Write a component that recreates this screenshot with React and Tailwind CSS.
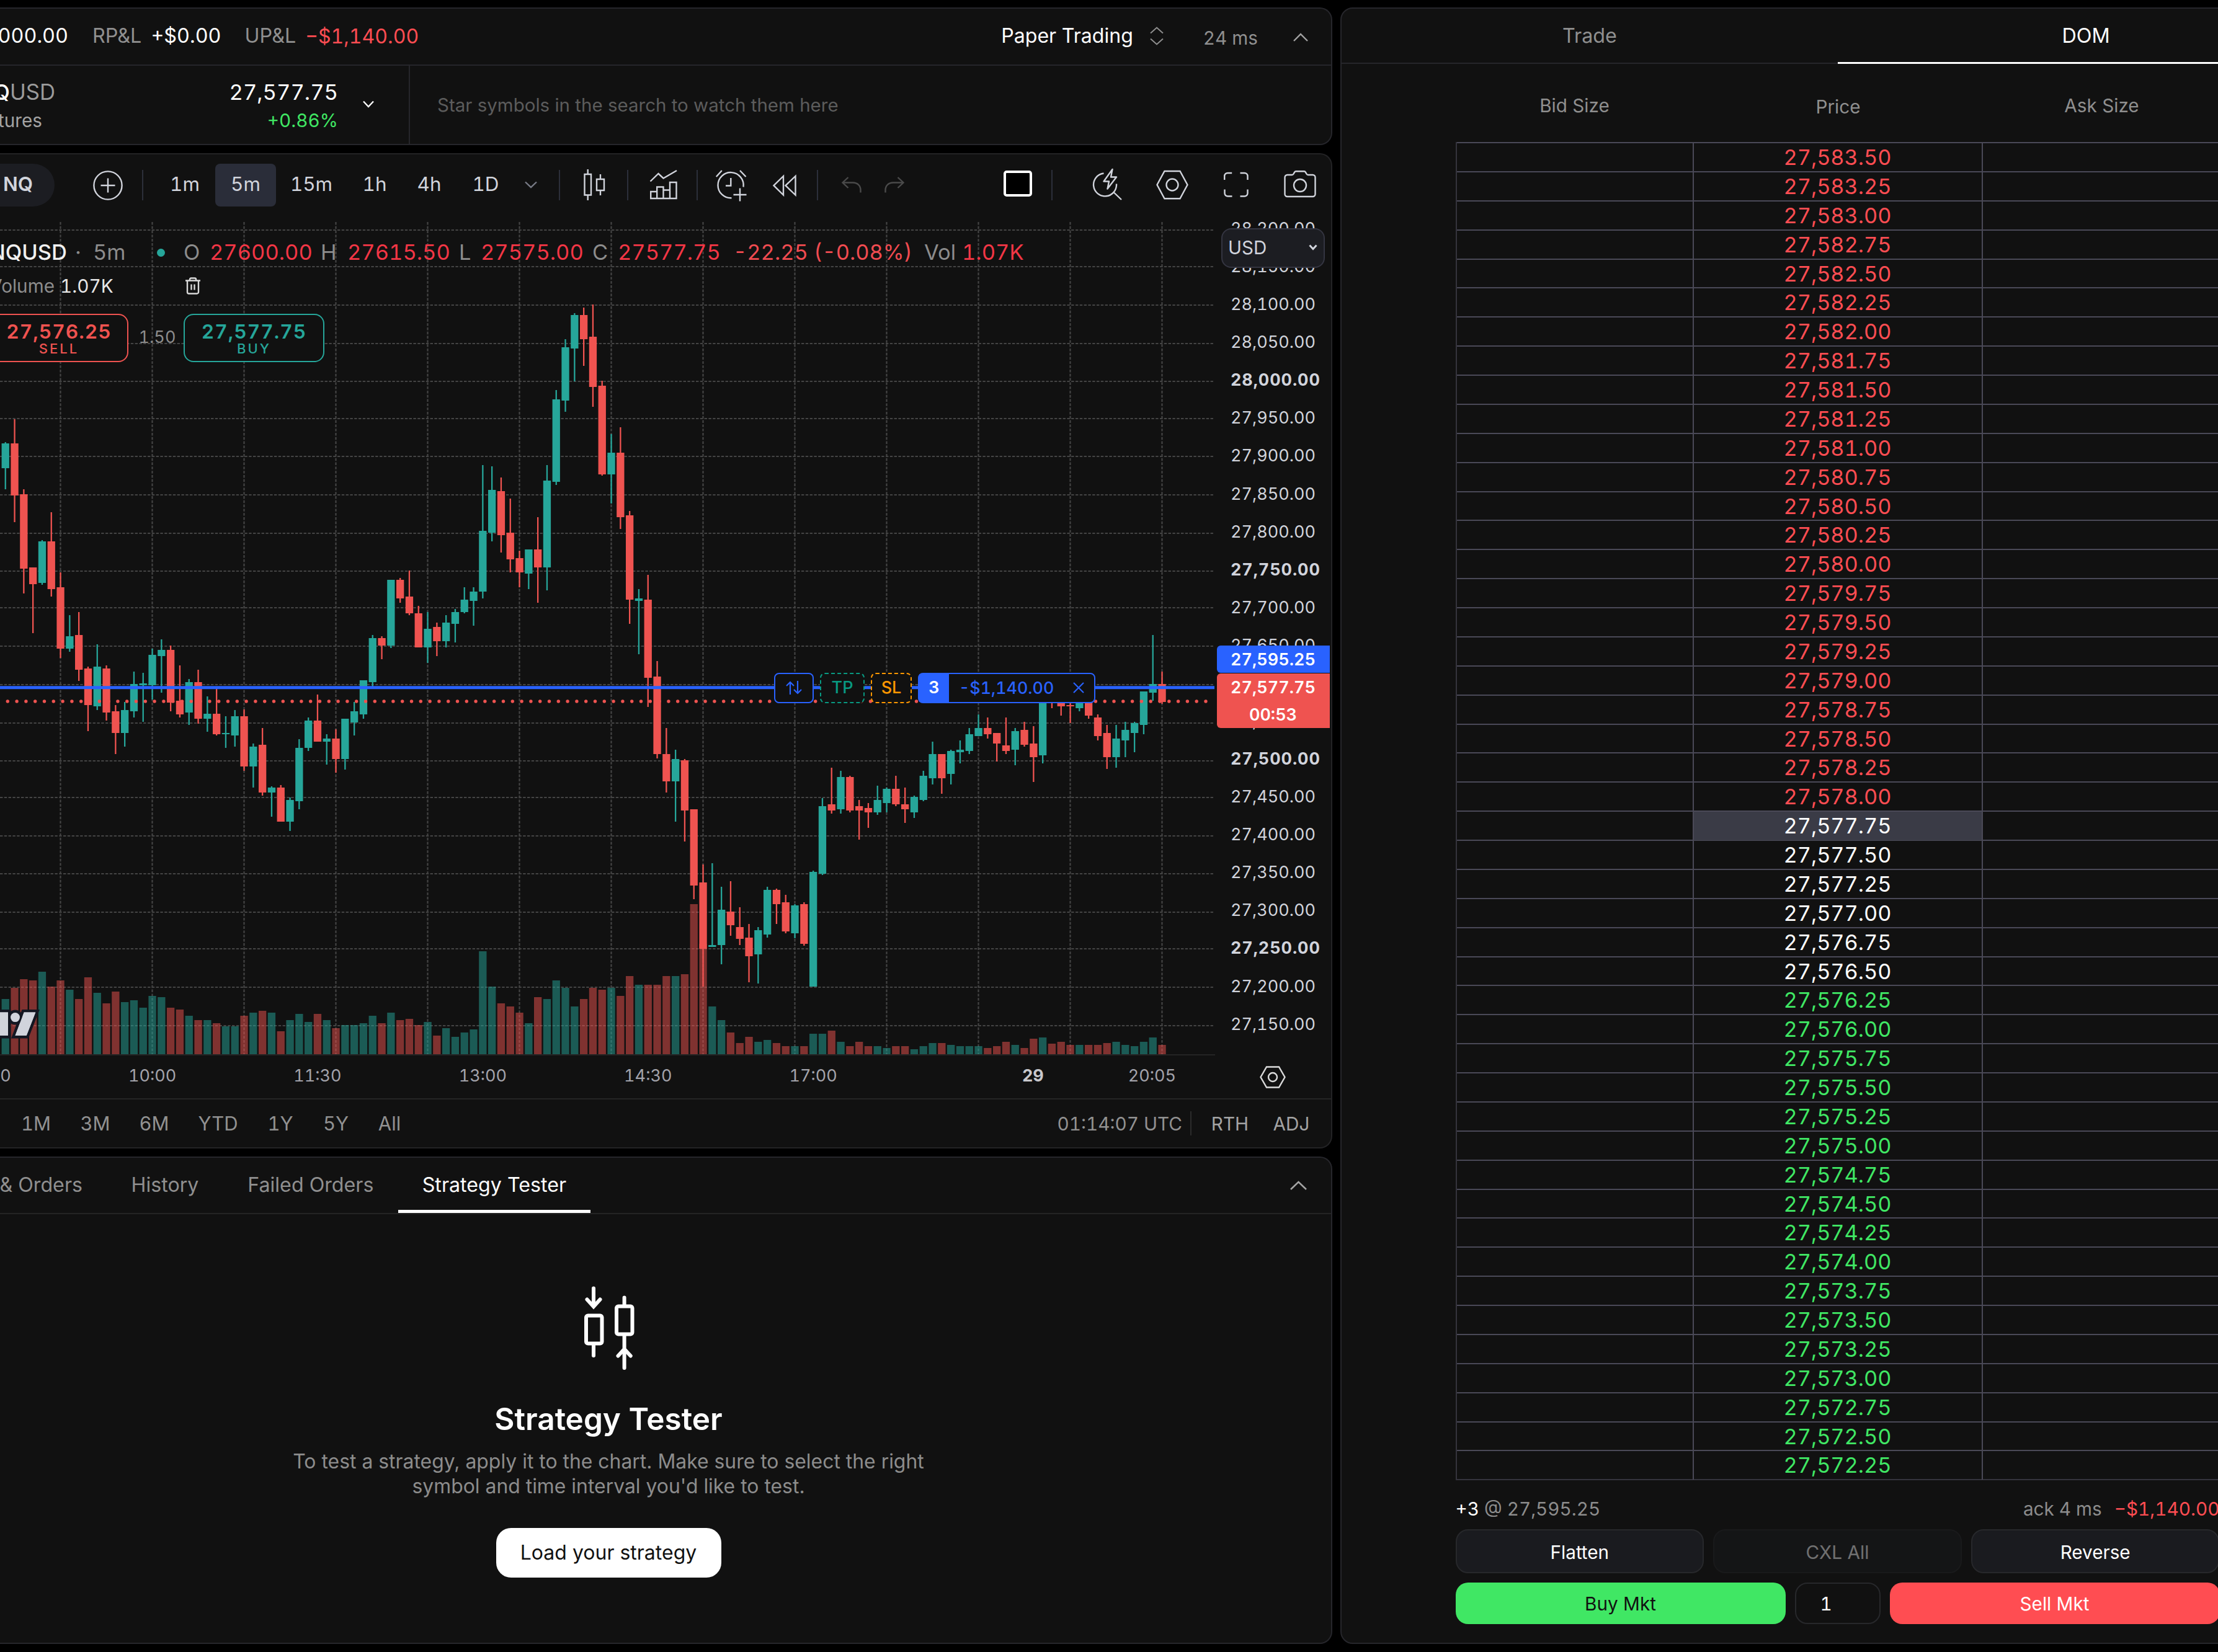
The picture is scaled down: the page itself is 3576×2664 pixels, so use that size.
import React from 'react';

// [up, high, bodyTop, bodyBottom, low, volumeTop] in canvas px
const candles = [
  [1, 713, 715, 755, 789, 1611], [0, 676, 715, 799, 842, 1593], [0, 789, 797, 917, 957, 1579],
  [0, 915, 915, 942, 1021, 1581], [1, 871, 873, 940, 943, 1567], [0, 826, 873, 950, 962, 1591],
  [0, 923, 947, 1046, 1061, 1581], [1, 992, 1026, 1046, 1051, 1596], [0, 987, 1024, 1080, 1098, 1611],
  [0, 1075, 1078, 1137, 1179, 1576], [1, 1039, 1075, 1139, 1145, 1601], [0, 1073, 1078, 1149, 1162, 1618],
  [0, 1137, 1147, 1182, 1216, 1599], [1, 1132, 1145, 1182, 1204, 1616], [1, 1083, 1103, 1147, 1157, 1613],
  [1, 1085, 1102, 1105, 1164, 1625], [1, 1046, 1056, 1105, 1128, 1606], [1, 1031, 1048, 1058, 1117, 1608],
  [0, 1041, 1048, 1133, 1147, 1625], [0, 1073, 1130, 1152, 1157, 1628], [1, 1095, 1100, 1149, 1169, 1638],
  [0, 1080, 1100, 1159, 1167, 1645], [1, 1123, 1151, 1159, 1180, 1645], [0, 1111, 1151, 1184, 1186, 1650],
  [1, 1155, 1182, 1184, 1206, 1655], [1, 1145, 1155, 1186, 1204, 1655], [0, 1144, 1155, 1236, 1243, 1638],
  [1, 1199, 1204, 1236, 1270, 1633], [0, 1174, 1201, 1278, 1283, 1630], [1, 1268, 1270, 1278, 1317, 1633],
  [0, 1266, 1270, 1325, 1325, 1663], [1, 1286, 1290, 1325, 1340, 1645], [1, 1192, 1206, 1292, 1305, 1635],
  [1, 1157, 1162, 1206, 1211, 1648], [0, 1120, 1162, 1196, 1196, 1635], [1, 1184, 1191, 1196, 1233, 1645],
  [0, 1176, 1191, 1224, 1246, 1658], [1, 1159, 1159, 1224, 1241, 1653], [1, 1132, 1147, 1165, 1186, 1653],
  [1, 1097, 1097, 1152, 1159, 1650], [1, 1024, 1029, 1100, 1107, 1638], [0, 1026, 1029, 1041, 1063, 1650],
  [1, 935, 935, 1041, 1045, 1633], [0, 932, 935, 965, 972, 1645], [0, 920, 962, 989, 992, 1643],
  [0, 977, 989, 1044, 1044, 1653], [1, 987, 1014, 1044, 1069, 1648], [0, 1004, 1011, 1034, 1058, 1670],
  [1, 992, 1004, 1034, 1044, 1658], [1, 982, 987, 1006, 1036, 1672], [1, 947, 967, 987, 989, 1665],
  [1, 947, 954, 969, 1009, 1660], [1, 750, 856, 954, 965, 1534], [1, 752, 790, 859, 873, 1591],
  [0, 770, 792, 863, 891, 1618], [0, 804, 859, 902, 923, 1623], [0, 888, 900, 923, 947, 1633],
  [1, 886, 886, 925, 950, 1650], [0, 834, 886, 915, 972, 1608], [1, 750, 775, 915, 952, 1611],
  [1, 629, 644, 777, 782, 1581], [1, 547, 560, 646, 664, 1593], [1, 505, 508, 562, 615, 1623],
  [0, 496, 508, 547, 590, 1611], [0, 491, 543, 624, 656, 1593], [0, 614, 622, 765, 767, 1596],
  [1, 700, 730, 765, 812, 1593], [0, 689, 730, 834, 853, 1606], [0, 824, 831, 967, 1006, 1574],
  [1, 950, 965, 969, 1055, 1588], [0, 927, 967, 1093, 1140, 1588], [0, 1066, 1091, 1216, 1223, 1588],
  [0, 1174, 1216, 1260, 1278, 1574], [1, 1209, 1224, 1260, 1325, 1574], [0, 1224, 1226, 1307, 1357, 1571],
  [0, 1305, 1305, 1428, 1450, 1458], [0, 1394, 1423, 1530, 1591, 1522], [1, 1392, 1524, 1527, 1527, 1623],
  [1, 1430, 1467, 1524, 1555, 1645], [0, 1421, 1470, 1492, 1509, 1665], [0, 1463, 1495, 1514, 1524, 1682],
  [0, 1490, 1512, 1542, 1584, 1672], [1, 1495, 1500, 1539, 1586, 1680], [1, 1430, 1435, 1507, 1512, 1677],
  [0, 1433, 1435, 1458, 1490, 1682], [0, 1443, 1455, 1502, 1505, 1687], [1, 1458, 1460, 1505, 1513, 1687],
  [0, 1455, 1458, 1522, 1525, 1687], [1, 1404, 1406, 1591, 1591, 1667], [1, 1287, 1300, 1409, 1411, 1667],
  [0, 1238, 1297, 1307, 1312, 1662], [1, 1243, 1253, 1305, 1312, 1680], [0, 1251, 1253, 1307, 1310, 1687],
  [0, 1290, 1300, 1307, 1354, 1680], [0, 1295, 1303, 1310, 1335, 1687], [1, 1267, 1290, 1310, 1314, 1687],
  [1, 1270, 1272, 1295, 1310, 1690], [0, 1251, 1272, 1297, 1300, 1687], [0, 1270, 1297, 1305, 1327, 1687],
  [1, 1283, 1285, 1310, 1319, 1692], [1, 1243, 1251, 1290, 1292, 1687], [1, 1196, 1216, 1255, 1265, 1682],
  [0, 1216, 1216, 1255, 1280, 1682], [1, 1209, 1211, 1248, 1265, 1685], [1, 1194, 1209, 1213, 1231, 1687],
  [1, 1174, 1184, 1211, 1216, 1687], [1, 1152, 1174, 1187, 1187, 1687], [0, 1157, 1174, 1184, 1191, 1690],
  [0, 1182, 1182, 1199, 1228, 1687], [0, 1157, 1202, 1211, 1216, 1680], [1, 1174, 1179, 1209, 1234, 1685],
  [0, 1164, 1177, 1201, 1204, 1690], [0, 1171, 1199, 1221, 1261, 1675], [1, 1123, 1128, 1218, 1231, 1673],
  [0, 1120, 1126, 1131, 1142, 1683], [0, 1120, 1128, 1139, 1154, 1680], [0, 1125, 1137, 1139, 1166, 1685],
  [1, 1120, 1128, 1142, 1147, 1685], [0, 1120, 1126, 1154, 1159, 1685], [0, 1152, 1157, 1187, 1194, 1685],
  [0, 1169, 1182, 1221, 1240, 1682], [1, 1169, 1191, 1221, 1238, 1680], [1, 1164, 1177, 1194, 1221, 1685],
  [1, 1164, 1166, 1182, 1213, 1687], [1, 1115, 1115, 1169, 1184, 1680], [1, 1024, 1103, 1117, 1130, 1673],
  [0, 1083, 1103, 1132, 1135, 1685],
];

const gridRows = [371, 430, 492, 554, 615, 675, 736, 798, 860, 921, 980, 1042, 1104, 1166, 1227, 1286, 1348, 1409, 1471, 1530, 1592, 1654];
const gridCols = Array.from({ length: 13 }, (_, i) => 97.5 + i * 148);
const priceLabels = Array.from({ length: 22 }, (_, i) => 28200 - i * 50);
const ladder = Array.from({ length: 46 }, (_, i) => 27583.5 - i * 0.25);

const intervals = [
  ['1m', 'w-[98px]'],
  ['5m', 'w-[98px] bg-[#2a2d39] rounded-lg'],
  ['15m', 'w-[114px]'],
  ['1h', 'w-[90px]'],
  ['4h', 'w-[86px]'],
  ['1D', 'w-[96px]'],
];

const ranges = [
  ['1M', 'w-[96px]'],
  ['3M', 'w-[95px]'],
  ['6M', 'w-[95px]'],
  ['YTD', 'w-[111px]'],
  ['1Y', 'w-[90px]'],
  ['5Y', 'w-[89px]'],
  ['All', 'w-[84px]'],
];

const fmt = (n) => n.toLocaleString('en-US', { minimumFractionDigits: 2 });

const Chevron = ({ d, w, h, className, stroke = 2.4 }) => (
  <svg width={w} height={h} viewBox={`0 0 ${w} ${h}`} className={className} fill="none" stroke="currentColor" strokeWidth={stroke}>
    <path d={d} />
  </svg>
);

// Toolbar icons share a 52px tall box
const ToolIcon = ({ w, className, children }) => (
  <svg width={w} height="52" viewBox={`0 0 ${w} 52`} className={`shrink-0 overflow-visible ${className}`} fill="none" stroke="currentColor" strokeWidth="2.4">
    {children}
  </svg>
);

const Divider = ({ className }) => <div className={`w-[2px] h-[49px] shrink-0 bg-[#2c2f3a] ${className}`} />;

const AccountBar = () => (
  <section className="h-[222px] shrink-0 bg-[#111111] border-2 border-l-0 border-[#26262b] rounded-r-[20px] overflow-hidden">
    <div className="flex items-center h-[92px] pb-px border-b-2 border-[#26262b] text-[32.3px] tabular-nums whitespace-nowrap">
      <div className="w-[110px] flex justify-end text-white">$50,000.00</div>
      <div className="ml-[39px] text-[#8f8f8f]">RP&amp;L</div>
      <div className="ml-[15px] text-white">+$0.00</div>
      <div className="ml-[38px] text-[#8f8f8f]">UP&amp;L</div>
      <div className="ml-[15px] text-[32px] text-[#ff4d52]">−$1,140.00</div>
      <div className="ml-auto flex items-center pr-[37px]">
        <span className="text-[32.1px] text-white">Paper Trading</span>
        <Chevron w={22} h={30} d="M1 10.5 11 1.5 21 10.5M1 19.5 11 28.5 21 19.5" className="ml-[27px] text-[#8f8f8f]" stroke={2} />
        <span className="ml-[64px] mt-[5px] text-[29.7px] text-[#8f8f8f]">24 ms</span>
        <Chevron w={24} h={14} d="M1 13 12 2 23 13" className="ml-[57px] mt-[3px] text-[#a3a3a3]" />
      </div>
    </div>
    <div className="flex items-center h-[126px] whitespace-nowrap">
      <div className="w-[661px] h-full flex items-center pt-[4px] border-r-2 border-[#26262b]">
        <div className="-ml-[37px] leading-[46px]">
          <div className="text-[34.7px] text-[#9b9b9b]"><span className="text-white font-medium">NQ</span>USD</div>
          <div className="text-[29.7px] text-[#a3a3a3]">Futures</div>
        </div>
        <div className="ml-auto text-right leading-[46px] tabular-nums">
          <div className="text-[34.6px] text-white">27,577.75</div>
          <div className="text-[29.7px] text-[#40e764]">+0.86%</div>
        </div>
        <Chevron w={18} h={12} d="M1 1.5 9 10 17 1.5" className="ml-[40px] mr-[56px] mb-[6px] text-white" />
      </div>
      <div className="ml-[44px] text-[29.5px] text-[#5c5c5c]">Star symbols in the search to watch them here</div>
    </div>
  </section>
);

const ChartToolbar = () => (
  <div className="flex items-center h-[98px] text-[31.4px] text-[#d1d4dc] tabular-nums">
    <div className="w-[88px] h-[69px] shrink-0 flex items-center pl-[5px] rounded-r-full bg-[#1c1d22] font-semibold">NQ</div>
    <ToolIcon w={48} className="ml-[62px]">
      <circle cx="24" cy="27" r="22.6" />
      <path d="M24 15.5v23M12.5 27h23" />
    </ToolIcon>
    <Divider className="ml-[31px] mr-[18px]" />
    {intervals.map(([label, cls]) => (
      <div key={label} className={`h-[69px] shrink-0 flex items-center justify-center pb-px ${cls}`}>{label}</div>
    ))}
    <Chevron w={20} h={12} d="M1 1.5 10 10 19 1.5" className="ml-[15px] shrink-0 text-[#787b86]" />
    <Divider className="ml-[35px]" />
    <ToolIcon w={35} className="ml-[38px]">
      <path d="M1.5 9h10.5v33.500H1.500zM6.700 1v8M6.700 42.500v8.500M21 17h12v18H21zM27 9v8M27 35v8" />
    </ToolIcon>
    <Divider className="ml-[35px]" />
    <ToolIcon w={44} className="ml-[35px]">
      <path d="M.5 20.500 13.500 8 21.500 15.500 43 3" />
      <path d="M1.200 48V37h10V48M11.200 48V29.500h10.300V48M21.500 34.500H32V48M32 48V22h10.500V48zM0 48h43.700" />
    </ToolIcon>
    <Divider className="ml-[31px]" />
    <ToolIcon w={50} className="ml-[29px]">
      <path d="M25.500 47.200A20.600 20.600 0 1 1 44.500 29.500" />
      <path d="M24.300 15v12.500H16M.8 13 9.800 3M39 3l9.500 10M39 31.500v21M28.500 42h21" />
    </ToolIcon>
    <ToolIcon w={38} className="ml-[42px]">
      <path d="M1.500 27.200 17 12v30.500zM20.500 27.200 36.500 12v30.500z" />
    </ToolIcon>
    <Divider className="ml-[33px]" />
    <ToolIcon w={32} className="ml-[38px] text-[#4a4a4a]">
      <path d="M10.500 14 1.500 22.500l9 8.500M1.500 22.500H18c7.500 0 12.500 5 12.500 12v4" />
    </ToolIcon>
    <ToolIcon w={32} className="ml-[37px] text-[#4a4a4a]">
      <path d="M21.500 14l9 8.500-9 8.500M30.500 22.500H14c-7.500 0-12.500 5-12.500 12v4" />
    </ToolIcon>
    <div className="ml-[160px] mb-[5px] w-[46px] h-[42px] shrink-0 bg-black border-[4px] border-white rounded-[5px]" />
    <Divider className="ml-[31px]" />
    <ToolIcon w={44} className="ml-[68px]">
      <path d="M14.500 7.500A18.500 18.500 0 1 0 35 24.500M30 37.500 43 50" />
      <path d="M28.500 1 14.500 20.500H23L20.500 32.500 35 13.500H26z" strokeLinejoin="round" />
    </ToolIcon>
    <ToolIcon w={52} className="ml-[55px]">
      <path d="M13.500 4h25L50.500 26 38.500 48.200h-25L1.500 26z" />
      <circle cx="26" cy="26" r="9.500" />
    </ToolIcon>
    <ToolIcon w={40} className="ml-[57px]">
      <path d="M1.200 18v-6a5 5 0 0 1 5-5h7M26.500 7h7a5 5 0 0 1 5 5v6M38.500 33.500v6a5 5 0 0 1-5 5h-7M13.500 44.500h-7a5 5 0 0 1-5-5v-6" />
    </ToolIcon>
    <ToolIcon w={52} className="ml-[57px]">
      <path d="M5.500 10h7.500a3 3 0 0 0 2.500-1.500l1.500-2.700a3 3 0 0 1 2.500-1.500h13a3 3 0 0 1 2.500 1.500l1.500 2.700a3 3 0 0 0 2.500 1.500h7.500a4 4 0 0 1 4 4v27a4 4 0 0 1-4 4h-41a4 4 0 0 1-4-4v-27a4 4 0 0 1 4-4z" />
      <circle cx="26" cy="27" r="10" />
    </ToolIcon>
  </div>
);

const CandleChart = () => (
  <svg width="1959" height="1344" viewBox="0 358 1959 1344" className="shrink-0">
    <g stroke="#444444" strokeWidth="2.2" strokeDasharray="4.4 2.4">
      {gridRows.map((y) => <path key={y} d={`M0 ${y}H1957`} />)}
      {gridCols.map((x) => <path key={x} d={`M${x} 358V1700`} />)}
    </g>
    {candles.map(([up, , , , , vol], i) => (
      <rect key={i} x={2.6 + i * 14.8} y={vol} width="12.3" height={1700 - vol} fill={up ? '#26a69a' : '#ef5350'} opacity="0.5" />
    ))}
    {candles.map(([up, high, top, bottom, low], i) => (
      <g key={i} fill={up ? '#26a69a' : '#ef5350'}>
        <rect x={7.6 + i * 14.8} y={high} width="2.3" height={low - high} />
        <rect x={2.6 + i * 14.8} y={top} width="12.3" height={Math.max(bottom - top, 2)} />
      </g>
    ))}
    <path d="M0 1701H1959" stroke="#242424" strokeWidth="2.2" />
    <g stroke="#ef5350" strokeWidth="5.4" strokeLinecap="round" strokeDasharray="0 14.8">
      <path d="M12.300 1131H1480" />
      <path d="M1766.400 1131H1946" />
    </g>
    <path d="M0 1108.800H1958" stroke="#2962ff" strokeWidth="5" />
    {/* TradingView mark */}
    <g fill="#d1d4dc" stroke="#131722" strokeWidth="9" paintOrder="stroke">
      <path d="M-20 1632.600H13V1670H-4V1648H-20z" />
      <path d="M38.700 1632.600H57.300L42.700 1670H24.500z" />
      <circle cx="24.500" cy="1640.600" r="7.500" />
    </g>
    <path d="M-4 1632.600H13V1670H-4zM38.700 1632.600H57.300L42.700 1670H24.500z" fill="#d1d4dc" />
  </svg>
);

const Legend = () => (
  <div className="absolute left-0 top-0 whitespace-nowrap tabular-nums">
    <div className="flex items-center h-[42px] mt-[28px] text-[34.5px] text-[#8c8c8c]">
      <div className="w-[108px] flex justify-end font-medium text-[#f0f0f0]">NQUSD</div>
      <div className="ml-[10px] w-[16px] text-center">·</div>
      <div className="ml-[16px] w-[53px]">5m</div>
      <div className="ml-[50px] size-[13px] rounded-full bg-[#26a69a]" />
      <div className="ml-[30px] w-[42px]">O</div>
      <div className="w-[179px] text-[#f23645]">27600.00</div>
      <div className="w-[43px]">H</div>
      <div className="w-[180px] text-[#f23645]">27615.50</div>
      <div className="w-[35px]">L</div>
      <div className="w-[180px] text-[#f23645]">27575.00</div>
      <div className="w-[41px]">C</div>
      <div className="w-[186px] text-[#f23645]">27577.75</div>
      <div className="w-[308px] text-[34.4px] text-[#f04b50]">-22.25 (-0.08%)</div>
      <div className="w-[61px]">Vol</div>
      <div className="text-[#f23645]">1.07K</div>
    </div>
    <div className="flex items-center h-[36px] mt-[15px] text-[29.7px]">
      <div className="w-[88px] flex justify-end text-[#8c8c8c]">Volume</div>
      <div className="ml-[9px] w-[202px] text-[#e6e6e6]">1.07K</div>
      <svg width="24" height="28" viewBox="0 0 24 28" fill="none" stroke="#d9d9d9" strokeWidth="2.4">
        <path d="M0 5.500h24M7 5V3.500a2 2 0 0 1 2-2h6a2 2 0 0 1 2 2V5M3 6v18a2.500 2.500 0 0 0 2.500 2.500h13A2.500 2.500 0 0 0 21 24V6M9.500 11.500v9M14.500 11.500v9" />
      </svg>
    </div>
    <div className="flex items-center h-[78px] mt-[27px]">
      <div className="-ml-[20px] w-[227px] h-full pt-[2px] pl-[3px] flex flex-col items-center justify-center bg-[#111111] border-[2.500px] border-[#ef5350] rounded-[16px] text-[#ef5350]">
        <div className="text-[31.7px] leading-[31px] font-semibold tracking-[1px]">27,576.25</div>
        <div className="text-[22px] leading-[24px] font-medium tracking-[3px]">SELL</div>
      </div>
      <div className="w-[89px] pl-[4px] pb-[2px] text-center text-[27px] text-[#8c8c8c]">1.50</div>
      <div className="w-[227px] h-full pt-[2px] flex flex-col items-center justify-center bg-[#111111] border-[2.500px] border-[#26a69a] rounded-[16px] text-[#26a69a]">
        <div className="text-[31.7px] leading-[31px] font-semibold tracking-[1px]">27,577.75</div>
        <div className="text-[22px] leading-[24px] font-medium tracking-[3px]">BUY</div>
      </div>
    </div>
  </div>
);

const PositionTags = () => (
  <div className="absolute left-[1248px] top-[726.500px] h-[49px] flex text-[27px] font-medium tabular-nums">
    <div className="w-[64px] flex items-center justify-center bg-[#111111] border-[2.500px] border-[#2962ff] rounded-lg">
      <svg width="26" height="22" viewBox="0 0 26 22" fill="none" stroke="#2962ff" strokeWidth="2.200">
        <path d="M7 22V2M1 8l6-6 6 6M19 0v20M13 14l6 6 6-6" />
      </svg>
    </div>
    <div className="ml-[10px] w-[72px] flex items-center justify-center bg-[#111111] border-[2.500px] border-dashed border-[#089981] rounded-lg text-[#089981]">TP</div>
    <div className="ml-[10px] w-[66px] flex items-center justify-center bg-[#111111] border-[2.500px] border-dashed border-[#ff9800] rounded-lg text-[#ff9800]">SL</div>
    <div className="ml-[10px] w-[286px] flex items-stretch bg-[#111111] border-[2.500px] border-[#2962ff] rounded-lg text-[#2962ff]">
      <div className="w-[48px] flex items-center justify-center bg-[#2962ff] text-white font-semibold">3</div>
      <div className="pl-[16px] flex items-center text-[26.800px]">-$1,140.00</div>
      <svg width="18" height="18" viewBox="0 0 18 18" className="ml-auto mr-[16px] self-center" fill="none" stroke="#2962ff" strokeWidth="2.200">
        <path d="M1 1l16 16M17 1 1 17" />
      </svg>
    </div>
  </div>
);

const ChartPanel = () => (
  <section className="h-[1605px] shrink-0 bg-[#111111] border-2 border-l-0 border-[#232325] rounded-r-[20px] overflow-hidden">
    <ChartToolbar />
    <div className="relative mt-[11px] h-[1344px] flex overflow-hidden">
      <CandleChart />
      <div className="-mt-[20px] pl-[25px] text-[27px] text-[#d1d4dc] tabular-nums">
        {priceLabels.map((p) => (
          <div key={p} className={`h-[61.080px] leading-[62px] ${p % 250 === 0 ? 'font-bold tracking-[0.9px]' : ''}`}>{fmt(p)}</div>
        ))}
      </div>
      <Legend />
      <PositionTags />
      <div className="absolute left-[1969px] top-[10px] w-[167px] h-[64px] flex items-center justify-between pl-[9px] pr-[10px] pb-[2px] bg-[#1c1d22] border-2 border-[#343541] rounded-[16px] text-[29.500px] text-[#d1d4dc]">
        USD
        <Chevron w={14} h={10} d="M1.500 1.500 7 7.500 12.500 1.500" stroke={3} />
      </div>
      <div className="absolute left-[1961.500px] top-[683px] w-[182px] text-center text-[27px] leading-[45px] font-semibold text-white tabular-nums">
        <div className="h-[44px] bg-[#2962ff] rounded-l-[6px]">27,595.25</div>
        <div className="mt-[1px] h-[88px] bg-[#ef5350] rounded-l-[6px]">
          <div>27,577.75</div>
          <div className="-mt-px">00:53</div>
        </div>
      </div>
    </div>
    <div className="flex items-center h-[69px] pb-[3px] text-[27px] text-[#a3a3ab] tabular-nums">
      <div className="-ml-[154px] flex shrink-0 text-center">
        {['08:30', '10:00', '11:30', '13:00', '14:30', '17:00'].map((t) => <div key={t} className="w-[266.400px]">{t}</div>)}
      </div>
      <div className="ml-[173px] w-[96px] text-center font-bold text-[#c8c8cc]">29</div>
      <div className="ml-[96px] w-[96px] text-center">20:05</div>
      <svg width="42" height="36" viewBox="0 0 42 36" className="ml-[126px] mt-[3px]" fill="none" stroke="#dbdbdb" strokeWidth="2.400">
        <path d="M11 1.500h20L40.500 18 31 34.500H11L1.500 18z" />
        <circle cx="21" cy="18" r="7" />
      </svg>
    </div>
    <div className="flex items-center h-[79px] pt-[2px] border-t-2 border-[#242424] text-[31px] text-[#919191]">
      <div className="ml-[10px] flex text-center tabular-nums">
        {ranges.map(([label, w]) => <div key={label} className={w}>{label}</div>)}
      </div>
      <div className="ml-auto text-[29.700px] tabular-nums">01:14:07 UTC</div>
      <div className="ml-[13px] mb-[3px] w-[2px] h-[39px] bg-[#2b2b2b]" />
      <div className="ml-[12px] w-[100px] text-center text-[29.700px] text-[#a3a3a3]">RTH</div>
      <div className="w-[98px] mr-[15px] text-center text-[29.700px] text-[#a3a3a3]">ADJ</div>
    </div>
  </section>
);

const StrategyPanel = () => (
  <section className="h-[786px] shrink-0 bg-[#111111] border-2 border-l-0 border-[#26262b] rounded-r-[20px] overflow-hidden">
    <div className="flex h-[91px] border-b-2 border-[#242424] text-[32.200px] leading-[88px] text-[#8f8f8f] whitespace-nowrap">
      <div className="w-[172px] pr-[39px] flex justify-end">Positions &amp; Orders</div>
      <div className="px-[39.500px]">History</div>
      <div className="px-[39.300px]">Failed Orders</div>
      <div className="px-[39px] border-b-[5px] border-white text-white">Strategy Tester</div>
      <Chevron w={27} h={15} d="M1 14 13.500 2 26 14" className="ml-auto mr-[39px] mt-[37px] text-[#a3a3a3]" stroke={2.6} />
    </div>
    <div className="w-[1962px] flex flex-col items-center">
      <svg width="82" height="136" viewBox="0 0 82 136" className="mt-[116px] ml-[2px]" fill="none" stroke="white" strokeWidth="6" strokeLinecap="round">
        <path d="M16 3.500V32M5.500 21.500 16 33 26.500 21.500M16 95v17M65.600 18.500V30M65.600 80v52M55.500 112.500l10.100-11 10.100 11" />
        <rect x="4" y="47.400" width="25.500" height="45" rx="3" />
        <rect x="53" y="32.500" width="25.500" height="45" rx="3" />
      </svg>
      <h2 className="mt-[48px] text-[49.500px] leading-[60px] font-semibold text-white">Strategy Tester</h2>
      <p className="mt-[19px] text-[31.900px] leading-[40px] text-[#8c8c8c] text-center">
        To test a strategy, apply it to the chart. Make sure to select the right<br />
        symbol and time interval you'd like to test.
      </p>
      <button className="mt-[47px] w-[363px] h-[80px] rounded-[24px] bg-white text-[32px] text-[#111111]">Load your strategy</button>
    </div>
  </section>
);

const priceColor = (i) => (i < 23 ? 'text-[#ff4d52]' : i < 29 ? 'text-white' : 'text-[#40e764]');

const DomPanel = () => (
  <section className="w-[1604px] h-[2639px] shrink-0 bg-[#111111] border-2 border-[#26262b] rounded-[20px] text-[29.700px]">
    <div className="grid grid-cols-2 h-[89px] border-b-2 border-[#26262b] text-[32.300px] leading-[88px] text-center">
      <div className="text-[#8f8f8f]">Trade</div>
      <div className="h-[89px] border-b-[3px] border-white text-white">DOM</div>
    </div>
    <div className="ml-[183.500px] w-[1232px]">
      <div className="grid grid-cols-[384px_466px_384px] h-[126px] pt-[8px] items-center text-center text-[#8f8f8f]">
        <div>Bid Size</div>
        <div className="pt-[4px]">Price</div>
        <div>Ask Size</div>
      </div>
      <div className="border-x-2 border-b-2 border-[#34333c]">
        {ladder.map((price, i) => (
          <div key={price} className="grid grid-cols-[380px_468px_1fr] h-[46.880px] border-t-2 border-[#4a4957]">
            <div />
            <div className={`border-x-2 border-[#4a4957] text-center text-[34.300px] leading-[46px] tabular-nums ${priceColor(i)} ${i === 23 ? 'bg-[#3a3b46]' : ''}`}>
              {fmt(price)}
            </div>
            <div />
          </div>
        ))}
      </div>
      <div className="flex items-center h-[79px] pt-[14px] text-[#8c8c8c] tabular-nums">
        <span><span className="text-white">+3</span> @ 27,595.25</span>
        <span className="ml-auto">ack 4 ms</span>
        <span className="ml-[20px] text-[#ff4d52]">−$1,140.00</span>
      </div>
      <div className="grid grid-cols-3 gap-[15px] h-[71px] text-white">
        <button className="pt-[3px] rounded-[20px] border-2 border-[#27282b] bg-[#1a1b1f]">Flatten</button>
        <button className="pt-[3px] rounded-[20px] border-2 border-[#27282b] bg-[#1a1b1f] opacity-40">CXL All</button>
        <button className="pt-[3px] rounded-[20px] border-2 border-[#27282b] bg-[#1a1b1f]">Reverse</button>
      </div>
      <div className="flex gap-[15px] mt-[15px] h-[67px]">
        <button className="flex-1 pt-[2px] rounded-[20px] bg-[#40e764] text-[#111111]">Buy Mkt</button>
        <div className="w-[138px] flex items-center pt-[2px] pl-[39px] rounded-[20px] border-2 border-[#27282b] text-white tabular-nums">1</div>
        <button className="flex-1 pt-[2px] rounded-[20px] bg-[#ff4d52] text-white">Sell Mkt</button>
      </div>
    </div>
  </section>
);

const App = () => (
  <div className="w-[3576px] h-[2664px] overflow-hidden bg-black pt-[12px] flex gap-[13px] font-['Inter',sans-serif]">
    <div className="w-[2148px] shrink-0 flex flex-col gap-[13px]">
      <AccountBar />
      <ChartPanel />
      <StrategyPanel />
    </div>
    <DomPanel />
  </div>
);

export default App;
